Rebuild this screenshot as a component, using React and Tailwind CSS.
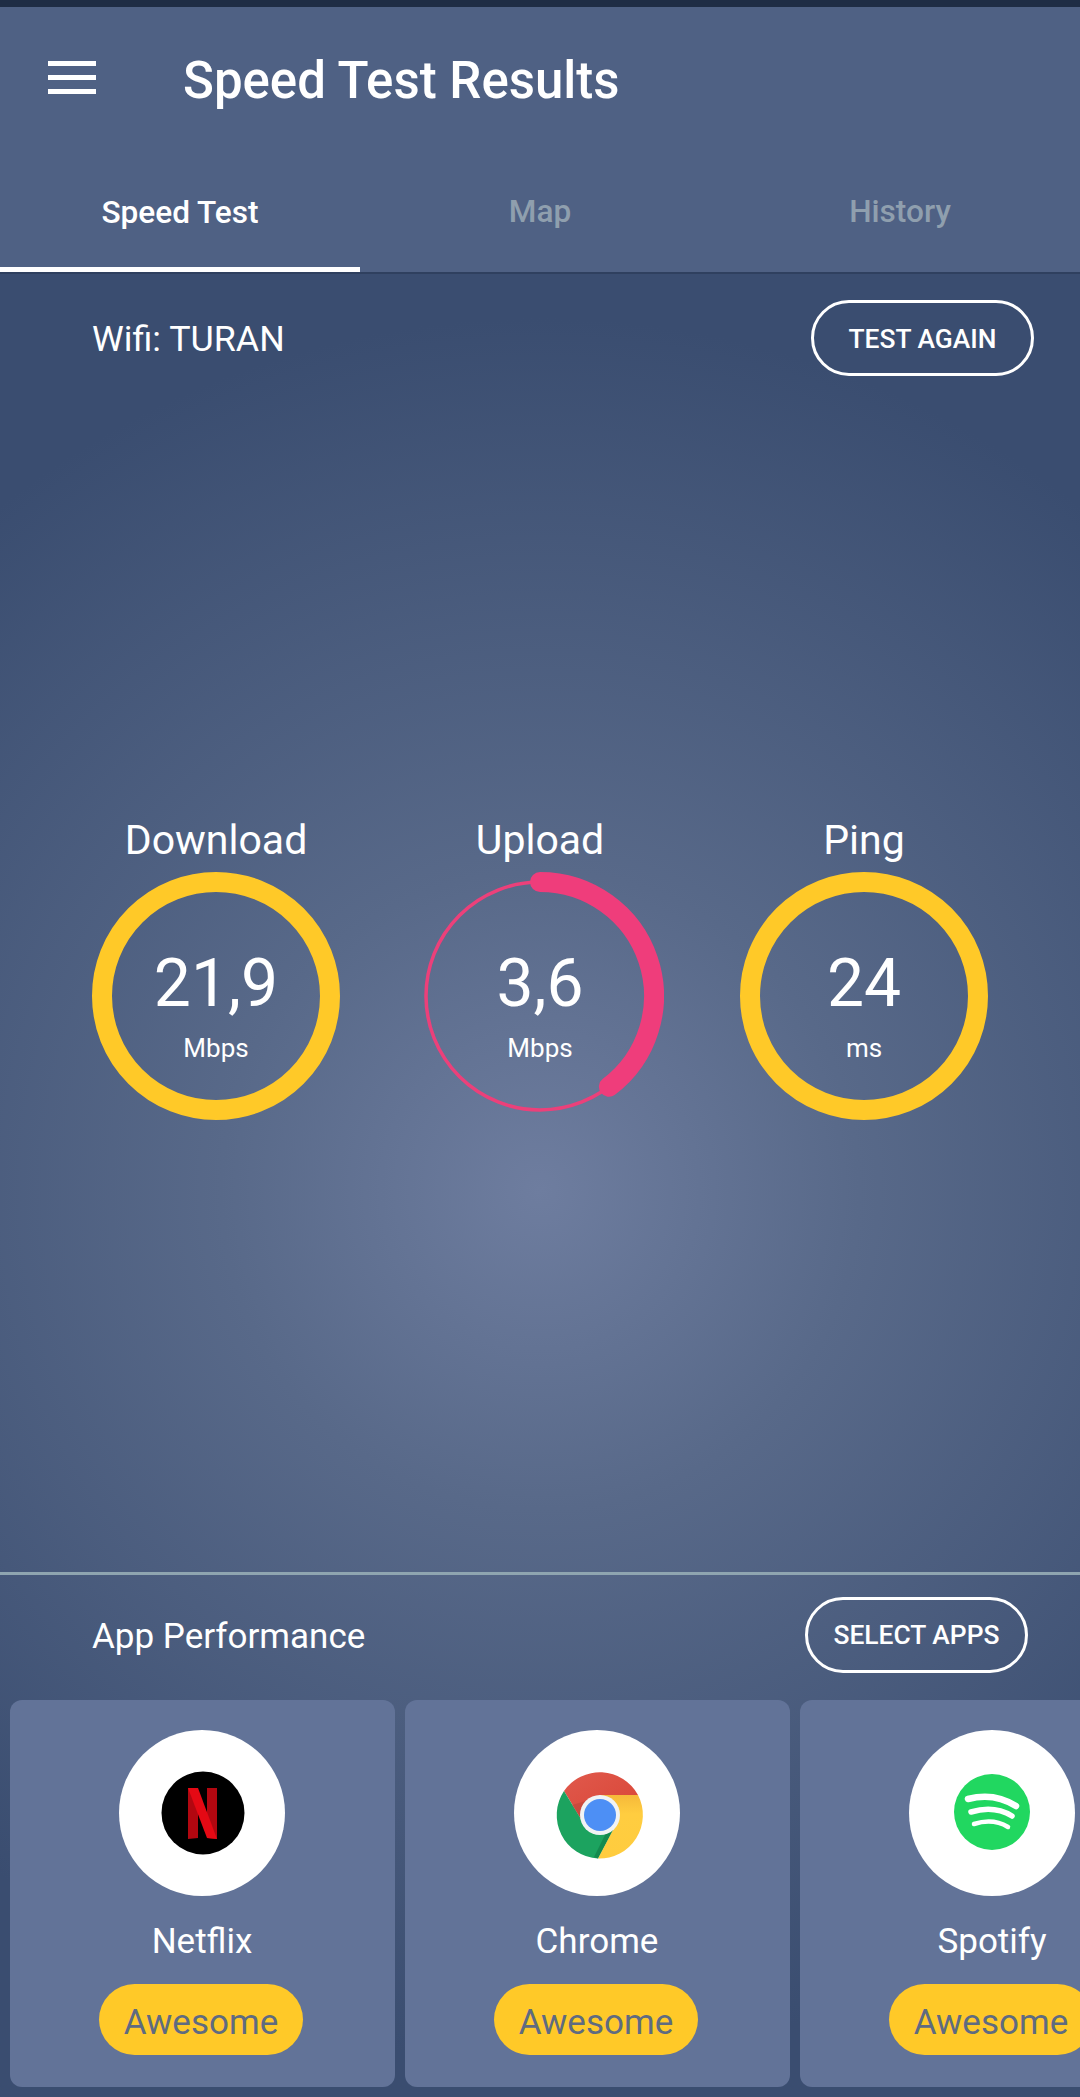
function Ring({ color = "#ffc928" }) {
  return (
    <svg width="248" height="248" viewBox="0 0 248 248" className="absolute inset-0">
      <circle cx="124" cy="124" r="114" fill="none" stroke={color} strokeWidth="20" />
    </svg>
  );
}

function UploadRing() {
  const r = 114;
  const a = (142.8 * Math.PI) / 180;
  const ex = 124 + r * Math.sin(a);
  const ey = 124 - r * Math.cos(a);
  return (
    <svg width="248" height="248" viewBox="0 0 248 248" className="absolute inset-0">
      <circle cx="124" cy="124" r="114" fill="none" stroke="#ec407a" strokeWidth="3.5" />
      <path
        d={`M124 10 A${r} ${r} 0 0 1 ${ex} ${ey}`}
        fill="none"
        stroke="#ef3d7b"
        strokeWidth="20"
        strokeLinecap="round"
      />
    </svg>
  );
}

function Gauge({ label, value, unit, upload }) {
  return (
    <div className="flex flex-col items-center">
      <div className="h-[46px] text-[41px] leading-[46px] text-white">{label}</div>
      <div className="relative mt-[9px] flex h-[248px] w-[248px] flex-col items-center">
        {upload ? <UploadRing /> : <Ring />}
        <div className="relative mt-[70px] h-[84px] text-[66px] leading-[84px] text-white">{value}</div>
        <div className="relative mt-[6px] h-[32px] text-[26px] leading-[32px] text-white">{unit}</div>
      </div>
    </div>
  );
}

function Outline({ children, w, pad }) {
  return (
    <div className={`flex h-[76px] items-center justify-center rounded-[38px] border-[3px] border-white text-[26.4px] font-medium text-white ${pad} ${w}`}>
      {children}
    </div>
  );
}

function Netflix() {
  return (
    <svg width="166" height="166" viewBox="0 0 166 166">
      <circle cx="84" cy="83" r="41.5" fill="#000" />
      <path d="M69 58h10v50l-10 1z" fill="#b20710" />
      <path d="M88 58h10v51l-10-1z" fill="#b20710" />
      <path d="M69 58h10l19 51-10-1z" fill="#e50914" />
    </svg>
  );
}

function Chrome() {
  return (
    <svg width="166" height="166" viewBox="0 0 166 166">
      <defs>
        <linearGradient id="cr" x1="0" y1="0" x2="1" y2="1">
          <stop offset="0" stopColor="#e0594c" />
          <stop offset="1" stopColor="#d94536" />
        </linearGradient>
        <linearGradient id="cy" x1="0" y1="0" x2="0" y2="1">
          <stop offset="0" stopColor="#f6b93a" />
          <stop offset="0.3" stopColor="#ffcd40" />
          <stop offset="1" stopColor="#ffcc3e" />
        </linearGradient>
      </defs>
      <g transform="translate(86 85)">
        <path d="M38 -20A43.5 43.5 0 0 0 -36 -24L-19 4L0 -20Z" fill="url(#cr)" />
        <path d="M-36 -24A43.5 43.5 0 0 0 -2 43.5L13 15L-19 4Z" fill="#1ca35f" />
        <path d="M38 -20A43.5 43.5 0 0 1 -2 43.5L13 15L0 -20Z" fill="url(#cy)" />
        <path d="M-19 4L-28 -10L-14 -14Z" fill="#b9463a" opacity="0.55" />
        <path d="M13 15L-2 43.5L-6 42L6 18Z" fill="#0f7a43" opacity="0.6" />
        <circle r="20" fill="#f1f3f4" />
        <circle r="16" fill="#4d8ff5" />
      </g>
    </svg>
  );
}

function Spotify() {
  return (
    <svg width="166" height="166" viewBox="0 0 166 166">
      <circle cx="83" cy="82" r="38" fill="#21d760" />
      <g fill="none" stroke="#fff" strokeLinecap="round">
        <path d="M59 69Q85 62 107 76" strokeWidth="6.5" />
        <path d="M62 82Q85 75 103 86" strokeWidth="5.5" />
        <path d="M65 94Q84 88 99 97" strokeWidth="4.5" />
      </g>
    </svg>
  );
}

function AppCard({ name, icon }) {
  return (
    <div className="flex h-[387px] w-[385px] shrink-0 flex-col items-center rounded-[12px] bg-[#627398] pr-[1px] pt-[30px]">
      <div className="h-[166px] w-[166px] rounded-full bg-white">{icon}</div>
      <div className="mt-[26px] h-[40px] text-[35px] leading-[40px] text-white">{name}</div>
      <div className="mr-[2px] mt-[22px] flex h-[71px] w-[204px] shrink-0 items-center justify-center rounded-full bg-[#ffc928] pt-[7px] text-[35px] text-[#5f6b80]">
        Awesome
      </div>
    </div>
  );
}

export default function App() {
  return (
    <div className="flex h-[2097px] w-[1080px] flex-col overflow-hidden font-['Roboto',sans-serif]">
      <div className="h-[7px] bg-[#1f2d45]" />
      <header className="bg-[#4f6184]">
        <div className="flex h-[146px] items-center">
          <div className="mb-[5px] ml-[48px] flex h-[33px] w-[48px] flex-col justify-between">
            <div className="h-[5px] bg-white" />
            <div className="h-[5px] bg-white" />
            <div className="h-[5px] bg-white" />
          </div>
          <div className="ml-[87px] pt-[2px] text-[51px] font-medium text-white">Speed Test Results</div>
        </div>
        <div className="grid h-[119px] grid-cols-3 text-[31.6px] font-medium">
          <div className="flex items-center justify-center border-b-[5px] border-white pt-[5px] text-white">Speed Test</div>
          <div className="flex items-center justify-center pb-[1px] text-[#8f9fae]">Map</div>
          <div className="flex items-center justify-center pb-[1px] text-[#8f9fae]">History</div>
        </div>
        <div className="h-[2px] bg-[#2f405f]" />
      </header>
      <div className="flex-1 bg-[radial-gradient(circle_at_50%_50%,#6e7d9f_0%,#586989_30%,#3a4d70_82%)] bg-[length:1080px_1832px]">
        <main className="h-[1298px]">
          <div className="flex items-center justify-between pl-[92px] pr-[46px] pt-[26px]">
            <div className="pt-[4px] text-[35.8px] text-white">Wifi: TURAN</div>
            <Outline w="w-[223px]" pad="pt-[3px]">TEST AGAIN</Outline>
          </div>
          <div className="mt-[441px] grid grid-cols-3 px-[54px]">
            <Gauge label="Download" value="21,9" unit="Mbps" />
            <Gauge label="Upload" value="3,6" unit="Mbps" upload />
            <Gauge label="Ping" value="24" unit="ms" />
          </div>
        </main>
        <div className="h-[3px] bg-[#8fa5b0]" />
        <section className="pt-[22px]">
          <div className="flex items-center justify-between pl-[92px] pr-[52px]">
            <div className="pt-[4px] text-[35px] text-white">App Performance</div>
            <Outline w="w-[223px]" pad="pt-[2px]">SELECT APPS</Outline>
          </div>
          <div className="mt-[27px] flex gap-[10px] pl-[10px]">
            <AppCard name="Netflix" icon={<Netflix />} />
            <AppCard name="Chrome" icon={<Chrome />} />
            <AppCard name="Spotify" icon={<Spotify />} />
          </div>
        </section>
      </div>
    </div>
  );
}
